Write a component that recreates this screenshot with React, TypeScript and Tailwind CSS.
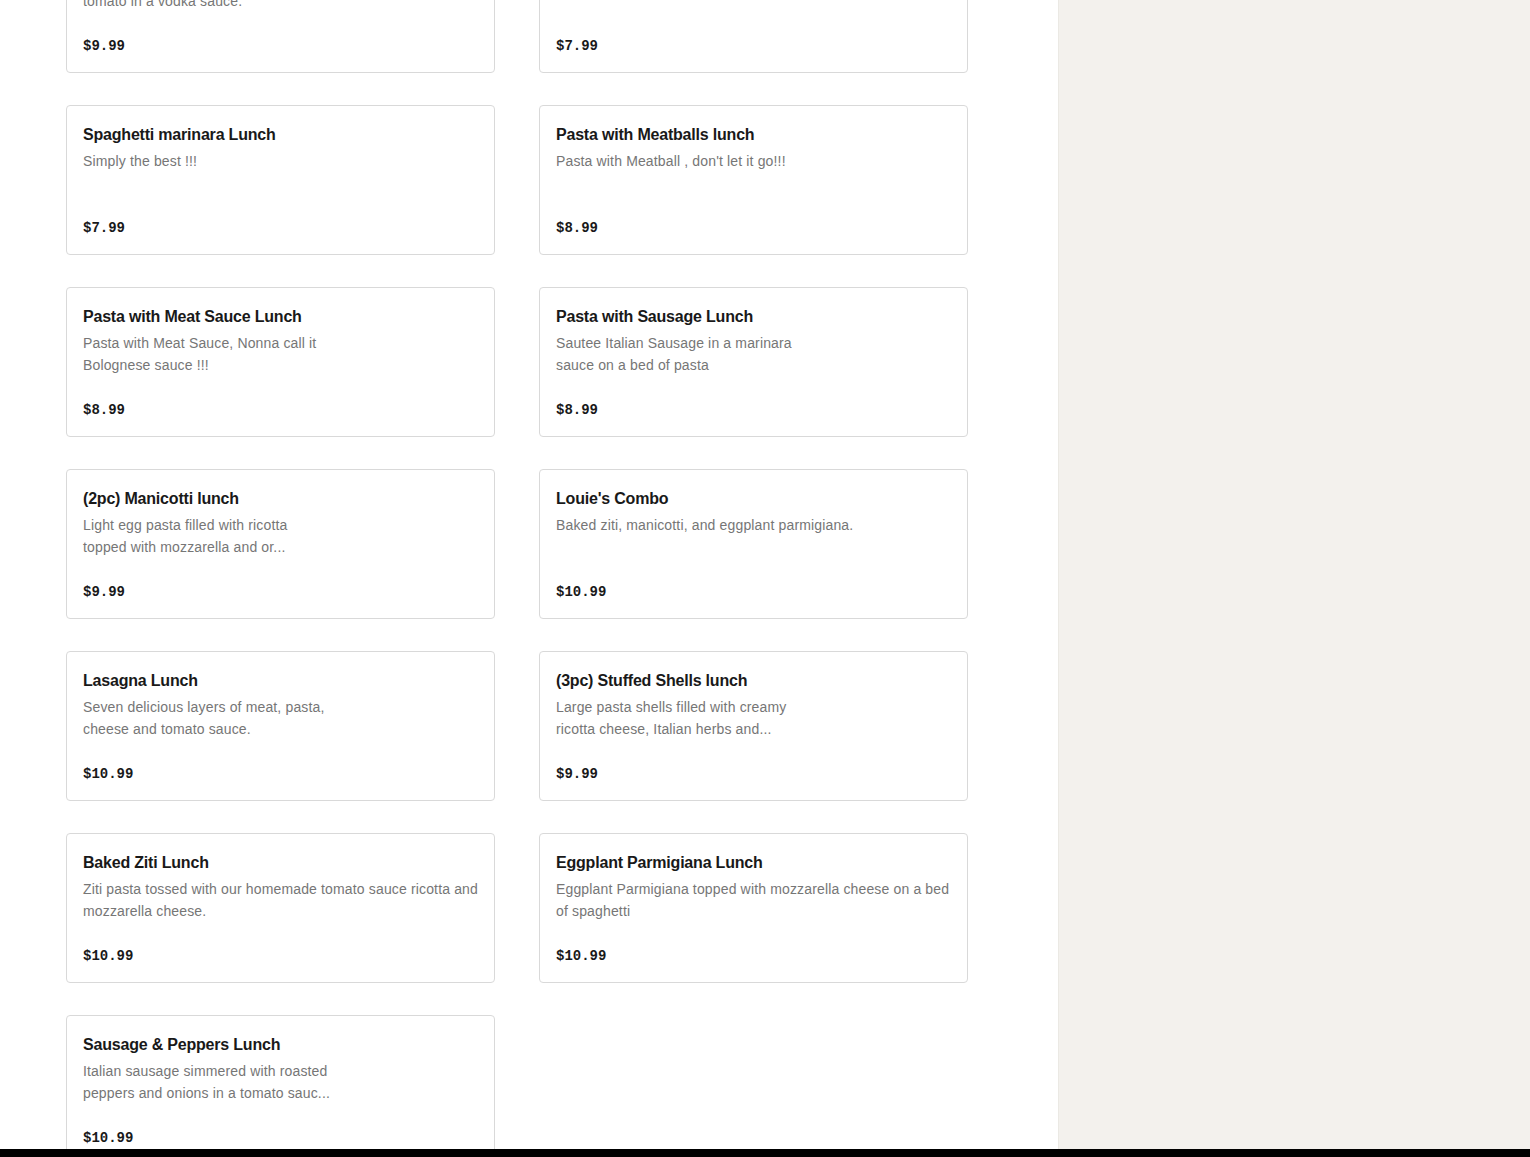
type Item = {
  name: string;
  desc: string[];
  price: string;
};

const items: Item[] = [
  { name: 'Penne alla Vodka Lunch', desc: ['Penne pasta with fresh cream and', 'tomato in a vodka sauce.'], price: '$9.99' },
  { name: 'Spaghetti Garlic & Oil Lunch', desc: ['Spaghetti with garlic and olive oil.'], price: '$7.99' },
  { name: 'Spaghetti marinara Lunch', desc: ['Simply the best !!!'], price: '$7.99' },
  { name: 'Pasta with Meatballs lunch', desc: ["Pasta with Meatball , don't let it go!!!"], price: '$8.99' },
  { name: 'Pasta with Meat Sauce Lunch', desc: ['Pasta with Meat Sauce, Nonna call it', 'Bolognese sauce !!!'], price: '$8.99' },
  { name: 'Pasta with Sausage Lunch', desc: ['Sautee Italian Sausage in a marinara', 'sauce on a bed of pasta'], price: '$8.99' },
  { name: '(2pc) Manicotti lunch', desc: ['Light egg pasta filled with ricotta', 'topped with mozzarella and or...'], price: '$9.99' },
  { name: "Louie's Combo", desc: ['Baked ziti, manicotti, and eggplant parmigiana.'], price: '$10.99' },
  { name: 'Lasagna Lunch', desc: ['Seven delicious layers of meat, pasta,', 'cheese and tomato sauce.'], price: '$10.99' },
  { name: '(3pc) Stuffed Shells lunch', desc: ['Large pasta shells filled with creamy', 'ricotta cheese, Italian herbs and...'], price: '$9.99' },
  { name: 'Baked Ziti Lunch', desc: ['Ziti pasta tossed with our homemade tomato sauce ricotta and', 'mozzarella cheese.'], price: '$10.99' },
  { name: 'Eggplant Parmigiana Lunch', desc: ['Eggplant Parmigiana topped with mozzarella cheese on a bed', 'of spaghetti'], price: '$10.99' },
  { name: 'Sausage & Peppers Lunch', desc: ['Italian sausage simmered with roasted', 'peppers and onions in a tomato sauc...'], price: '$10.99' },
];

function MenuCard({ item }: { item: Item }) {
  return (
    <div className="h-[150px] flex flex-col rounded-[4px] border border-[#d9d9d9] bg-white px-4 pt-[17px] pb-4">
      <h3 className="text-[16px] leading-6 font-semibold tracking-[-0.2px] text-[#191919] whitespace-nowrap">{item.name}</h3>
      <p className="mt-[3px] text-[14px] leading-[22px] tracking-[0.15px] text-[#767676]">
        {item.desc.map((line, i) => (
          <span key={i} className="block whitespace-nowrap">
            {line}
          </span>
        ))}
      </p>
      <span className="mt-auto text-[14px] leading-5 font-bold text-[#191919] font-['Liberation_Mono',monospace]">
        {item.price}
      </span>
    </div>
  );
}

export default function App() {
  return (
    <div className="h-[1157px] w-full overflow-hidden flex flex-col bg-white font-['Liberation_Sans',Arial,sans-serif]">
      <div className="flex flex-1 min-h-0">
        <main className="w-[1058px] shrink-0 bg-white">
          <div className="-mt-[77px] pl-[66px] grid grid-cols-[429px_429px] gap-x-[44px] gap-y-[32px]">
            {items.map((item) => (
              <MenuCard key={item.name} item={item} />
            ))}
          </div>
        </main>
        <aside className="flex-1 bg-[#f3f1ed] border-l border-[#ebe9e4]" />
      </div>
      <div className="h-2 shrink-0 bg-black" />
    </div>
  );
}
